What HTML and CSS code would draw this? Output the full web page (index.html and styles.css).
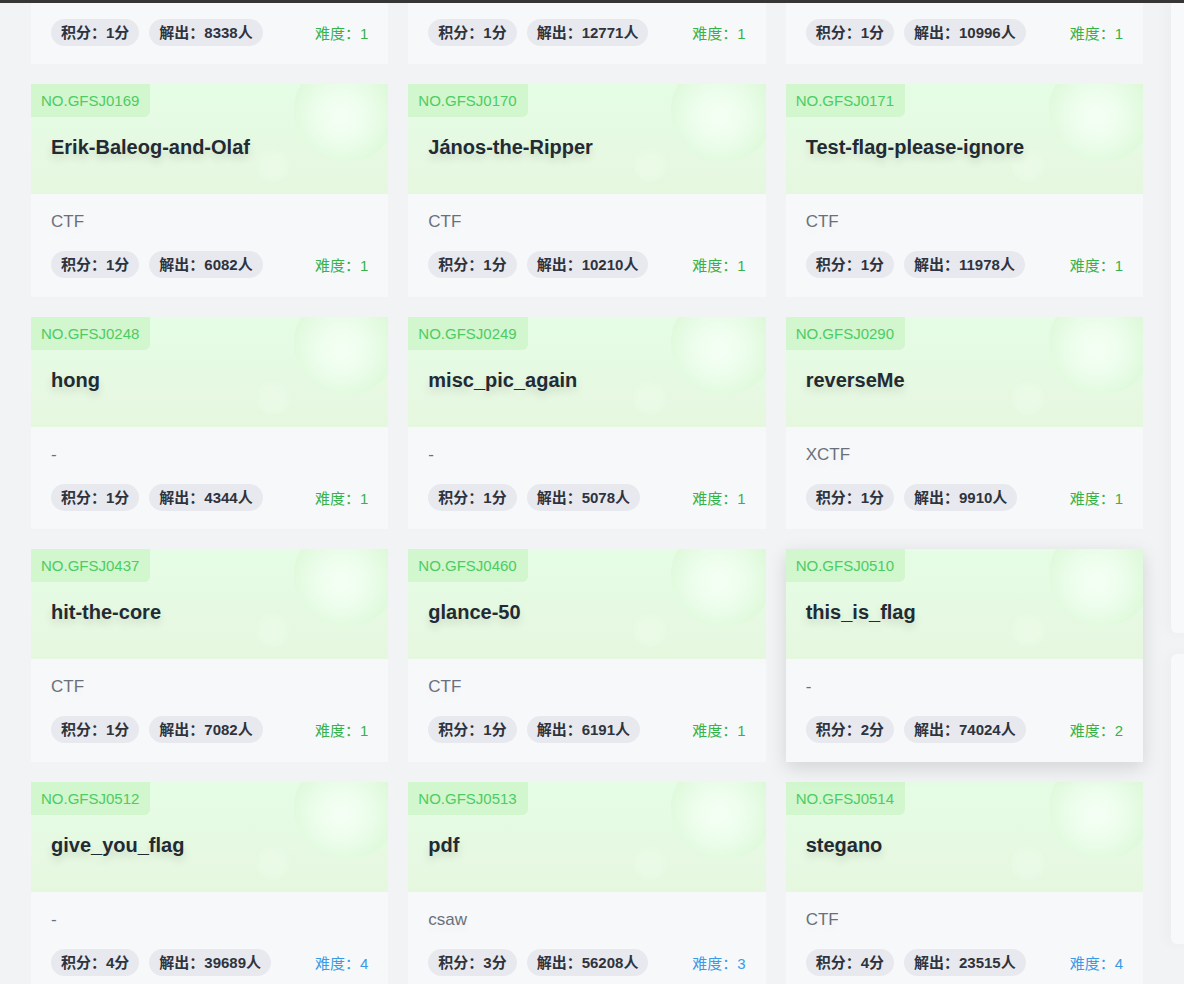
FILE: index.html
```html
<!DOCTYPE html>
<html lang="zh-CN">
<head>
<meta charset="utf-8">
<title>题目列表</title>
<link rel="stylesheet" href="styles.css">
</head>
<body>
<div class="topbar"></div>
<div class="layout">
  <main class="main">
    <div class="grid">
      <div class="card tail"><div class="body"><div class="foot"><span class="pill">积分：1分</span><span class="pill">解出：8338人</span><span class="diff green">难度：1</span></div></div></div>
      <div class="card tail"><div class="body"><div class="foot"><span class="pill">积分：1分</span><span class="pill">解出：12771人</span><span class="diff green">难度：1</span></div></div></div>
      <div class="card tail"><div class="body"><div class="foot"><span class="pill">积分：1分</span><span class="pill">解出：10996人</span><span class="diff green">难度：1</span></div></div></div>

      <div class="card"><div class="head"><span class="badge">NO.GFSJ0169</span><div class="title">Erik-Baleog-and-Olaf</div><i class="bubble big"></i><i class="bubble small"></i></div><div class="body"><div class="source">CTF</div><div class="foot"><span class="pill">积分：1分</span><span class="pill">解出：6082人</span><span class="diff green">难度：1</span></div></div></div>
      <div class="card"><div class="head"><span class="badge">NO.GFSJ0170</span><div class="title">János-the-Ripper</div><i class="bubble big"></i><i class="bubble small"></i></div><div class="body"><div class="source">CTF</div><div class="foot"><span class="pill">积分：1分</span><span class="pill">解出：10210人</span><span class="diff green">难度：1</span></div></div></div>
      <div class="card"><div class="head"><span class="badge">NO.GFSJ0171</span><div class="title">Test-flag-please-ignore</div><i class="bubble big"></i><i class="bubble small"></i></div><div class="body"><div class="source">CTF</div><div class="foot"><span class="pill">积分：1分</span><span class="pill">解出：11978人</span><span class="diff green">难度：1</span></div></div></div>

      <div class="card"><div class="head"><span class="badge">NO.GFSJ0248</span><div class="title">hong</div><i class="bubble big"></i><i class="bubble small"></i></div><div class="body"><div class="source">-</div><div class="foot"><span class="pill">积分：1分</span><span class="pill">解出：4344人</span><span class="diff green">难度：1</span></div></div></div>
      <div class="card"><div class="head"><span class="badge">NO.GFSJ0249</span><div class="title">misc_pic_again</div><i class="bubble big"></i><i class="bubble small"></i></div><div class="body"><div class="source">-</div><div class="foot"><span class="pill">积分：1分</span><span class="pill">解出：5078人</span><span class="diff green">难度：1</span></div></div></div>
      <div class="card"><div class="head"><span class="badge">NO.GFSJ0290</span><div class="title">reverseMe</div><i class="bubble big"></i><i class="bubble small"></i></div><div class="body"><div class="source">XCTF</div><div class="foot"><span class="pill">积分：1分</span><span class="pill">解出：9910人</span><span class="diff green">难度：1</span></div></div></div>

      <div class="card"><div class="head"><span class="badge">NO.GFSJ0437</span><div class="title">hit-the-core</div><i class="bubble big"></i><i class="bubble small"></i></div><div class="body"><div class="source">CTF</div><div class="foot"><span class="pill">积分：1分</span><span class="pill">解出：7082人</span><span class="diff green">难度：1</span></div></div></div>
      <div class="card"><div class="head"><span class="badge">NO.GFSJ0460</span><div class="title">glance-50</div><i class="bubble big"></i><i class="bubble small"></i></div><div class="body"><div class="source">CTF</div><div class="foot"><span class="pill">积分：1分</span><span class="pill">解出：6191人</span><span class="diff green">难度：1</span></div></div></div>
      <div class="card hover"><div class="head"><span class="badge">NO.GFSJ0510</span><div class="title">this_is_flag</div><i class="bubble big"></i><i class="bubble small"></i></div><div class="body"><div class="source">-</div><div class="foot"><span class="pill">积分：2分</span><span class="pill">解出：74024人</span><span class="diff green">难度：2</span></div></div></div>

      <div class="card"><div class="head"><span class="badge">NO.GFSJ0512</span><div class="title">give_you_flag</div><i class="bubble big"></i><i class="bubble small"></i></div><div class="body"><div class="source">-</div><div class="foot"><span class="pill">积分：4分</span><span class="pill">解出：39689人</span><span class="diff blue">难度：4</span></div></div></div>
      <div class="card"><div class="head"><span class="badge">NO.GFSJ0513</span><div class="title">pdf</div><i class="bubble big"></i><i class="bubble small"></i></div><div class="body"><div class="source">csaw</div><div class="foot"><span class="pill">积分：3分</span><span class="pill">解出：56208人</span><span class="diff blue">难度：3</span></div></div></div>
      <div class="card"><div class="head"><span class="badge">NO.GFSJ0514</span><div class="title">stegano</div><i class="bubble big"></i><i class="bubble small"></i></div><div class="body"><div class="source">CTF</div><div class="foot"><span class="pill">积分：4分</span><span class="pill">解出：23515人</span><span class="diff blue">难度：4</span></div></div></div>
    </div>
  </main>
  <aside class="sidebar">
    <div class="panel panel-top"></div>
    <div class="panel panel-bottom"></div>
  </aside>
</div>
</body>
</html>
```
FILE: styles.css
```css
html, body {
  margin: 0;
  padding: 0;
  height: 984px;
  overflow: hidden;
  background: #f2f3f5;
  font-family: "Liberation Sans", Arial, "Noto Sans CJK SC", sans-serif;
}

.topbar {
  position: fixed;
  top: 0;
  left: 0;
  right: 0;
  height: 3px;
  background: #363636;
  z-index: 10;
}

.layout {
  display: flex;
  align-items: flex-start;
  gap: 28px;
  padding-left: 31px;
  width: 1500px;
}

.main {
  width: 1112px;
  flex-shrink: 0;
}

.grid {
  display: grid;
  grid-template-columns: repeat(3, 1fr);
  column-gap: 20px;
  row-gap: 20px;
}

.card {
  background: #f7f8fa;
  overflow: hidden;
}

.card.hover {
  position: relative;
  z-index: 2;
  box-shadow: 0 6px 18px rgba(0, 0, 0, 0.13);
}

.head {
  position: relative;
  height: 110px;
  overflow: hidden;
  background: linear-gradient(180deg, #e5fde5 0%, #e6f9e2 60%, #e6f7e0 100%);
}

.badge {
  display: inline-block;
  position: relative;
  z-index: 1;
  height: 33px;
  line-height: 33px;
  padding: 0 11px 0 10px;
  background: #d2f6cd;
  color: #4ccc64;
  font-size: 15px;
  border-bottom-right-radius: 6px;
}

.title {
  position: relative;
  z-index: 1;
  margin-top: 16px;
  padding-left: 20px;
  font-size: 20px;
  line-height: 28px;
  font-weight: 700;
  color: #222a33;
  text-shadow: 0 5px 8px rgba(0, 0, 0, 0.13);
  white-space: nowrap;
}

.bubble {
  position: absolute;
  border-radius: 50%;
  display: block;
}

.bubble.big {
  left: 263px;
  top: -26px;
  width: 104px;
  height: 104px;
  background: radial-gradient(circle at 46% 56%, #f4fff4 0%, #eefeee 28%, #def9da 66%, #caf3c2 100%);
  filter: blur(0.4px);
}

.bubble.small {
  left: 225px;
  top: 64px;
  width: 34px;
  height: 34px;
  background: radial-gradient(circle at 50% 50%, rgba(236, 252, 234, 0.7) 0%, rgba(232, 250, 229, 0.7) 70%, rgba(220, 245, 215, 0.8) 100%);
  filter: blur(0.8px);
}

.body {
  height: 102.67px;
  box-sizing: border-box;
  padding: 16px 20px 0 20px;
}

.card.tail .body {
  height: 64px;
  padding-top: 18.5px;
}

.card.tail .foot {
  margin-top: 0;
}

.source {
  font-size: 17px;
  line-height: 24px;
  height: 24px;
  color: #6a707b;
  text-shadow: 0 6px 6px rgba(0, 0, 0, 0.04);
}

.foot {
  display: flex;
  align-items: center;
  gap: 10px;
  margin-top: 17px;
}

.pill {
  height: 27px;
  line-height: 27px;
  padding: 0 10px;
  border-radius: 14px;
  background: #e8e9ee;
  color: #2e333d;
  font-size: 15px;
  font-weight: 700;
  white-space: nowrap;
}

.diff {
  margin-left: auto;
  font-size: 15px;
  white-space: nowrap;
}

.diff.green { color: #36b24a; }
.diff.blue { color: #3b9ae6; }

.sidebar {
  width: 300px;
  flex-shrink: 0;
  display: flex;
  flex-direction: column;
  gap: 21px;
}

.panel {
  background: #f8f9fa;
  border-radius: 6px;
  box-shadow: -6px 0 14px rgba(0, 0, 0, 0.025);
}

.panel-top {
  height: 633px;
  border-top-left-radius: 0;
  border-top-right-radius: 0;
}

.panel-bottom {
  height: 290px;
}
```
